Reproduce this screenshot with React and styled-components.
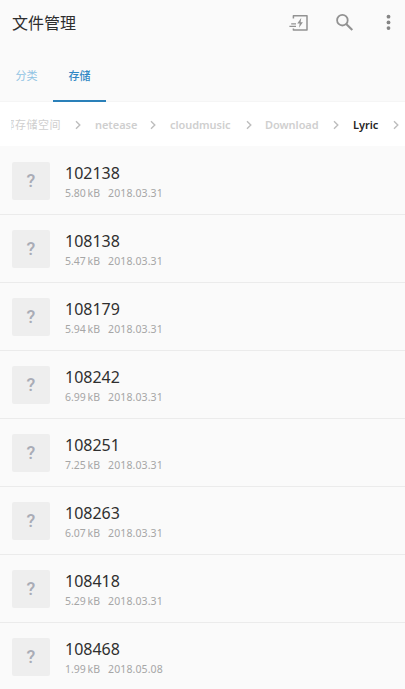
import React from "react";
import styled, { createGlobalStyle } from "styled-components";

const GlobalStyle = createGlobalStyle`
  * {
    box-sizing: border-box;
  }
  body {
    margin: 0;
    background: #fafafa;
    font-family: "Noto Sans", "Noto Sans CJK SC", sans-serif;
  }
`;

const Screen = styled.div`
  width: 405px;
  height: 689px;
  overflow: hidden;
  background: #fafafa;
`;

const Toolbar = styled.header`
  height: 46px;
  padding: 0 14px 0 12px;
  display: flex;
  align-items: center;
  justify-content: space-between;
  h1 {
    margin: 0;
    font-size: 16px;
    font-weight: 400;
    line-height: 24px;
    color: #2e2e2e;
  }
`;

const Actions = styled.div`
  display: flex;
  align-items: center;
  svg {
    display: block;
  }
  svg + svg {
    margin-left: 27px;
  }
  svg:last-child {
    margin-left: 32px;
  }
`;

const Tabs = styled.nav`
  height: 56px;
  display: flex;
  border-bottom: 1px solid #f5f5f5;
`;

const Tab = styled.div`
  width: 53px;
  height: 56px;
  padding-top: 20px;
  text-align: center;
  font-size: 11px;
  line-height: 20px;
  font-weight: ${(props) => (props.$active ? 500 : 400)};
  color: ${(props) => (props.$active ? "#3288c4" : "#8fc3e3")};
  border-bottom: 2px solid
    ${(props) => (props.$active ? "#2a80b9" : "transparent")};
`;

const Breadcrumb = styled.div`
  height: 44px;
  padding: 2px 0 0 11px;
  background: #ffffff;
  display: flex;
  align-items: center;
  overflow: hidden;
`;

const Crumb = styled.span`
  width: ${(props) => props.$width}px;
  flex: none;
  white-space: nowrap;
  font-size: 11px;
  line-height: 16px;
  font-weight: 600;
  letter-spacing: -0.05px;
  color: ${(props) => (props.$current ? "#252525" : "#cfcfcf")};
`;

/* first crumb is scrolled partly off, so its leading glyph is cut */
const ClippedCrumb = styled(Crumb)`
  display: flex;
  justify-content: flex-end;
  overflow: hidden;
  font-weight: 400;
  letter-spacing: 0.5px;
`;

const Separator = styled.svg`
  flex: none;
  display: block;
  margin: 0 ${(props) => props.$after}px 0 ${(props) => props.$before}px;
`;

const Row = styled.div`
  height: 68px;
  padding: 0 12px;
  display: flex;
  align-items: center;
  border-bottom: 1px solid #ebebeb;
  &:first-child {
    height: 69px;
    padding-top: 1px;
  }
`;

const Thumb = styled.div`
  width: 38px;
  height: 38px;
  margin-right: 15px;
  border-radius: 2px;
  background: #eeeeee;
  display: flex;
  align-items: center;
  justify-content: center;
  font-family: Roboto, sans-serif;
  font-size: 18px;
  font-weight: 500;
  color: #a9acb6;
`;

const Name = styled.div`
  padding-top: 3px;
  font-size: 16px;
  line-height: 20px;
  color: #2f2f2f;
`;

const Meta = styled.div`
  display: flex;
  margin-top: 2px;
  font-size: 10.5px;
  line-height: 16px;
  color: #a6a6a6;
`;

const Size = styled.span`
  width: 43px;
  word-spacing: -1px;
`;

const DateText = styled.span`
  letter-spacing: 0.12px;
`;

const files = [
  { name: "102138", size: "5.80 kB", date: "2018.03.31" },
  { name: "108138", size: "5.47 kB", date: "2018.03.31" },
  { name: "108179", size: "5.94 kB", date: "2018.03.31" },
  { name: "108242", size: "6.99 kB", date: "2018.03.31" },
  { name: "108251", size: "7.25 kB", date: "2018.03.31" },
  { name: "108263", size: "6.07 kB", date: "2018.03.31" },
  { name: "108418", size: "5.29 kB", date: "2018.03.31" },
  { name: "108468", size: "1.99 kB", date: "2018.05.08" },
];

function Chevron({ before = 0, after = 0 }) {
  return (
    <Separator $before={before} $after={after} width="6" height="10" viewBox="0 0 6 10">
      <path d="M1 1.2 4.8 5 1 8.8" fill="none" stroke="#bdbdbd" strokeWidth="1.4" />
    </Separator>
  );
}

function TransferIcon() {
  return (
    <svg width="20" height="18" viewBox="0 0 20 18" fill="none" stroke="#929292">
      <path d="M4.4 4.6V1.7H18V16H4.4V14.4" strokeWidth="1.5" strokeLinejoin="round" />
      <path d="M2.2 9.8H7M.4 12.4H7" strokeWidth="1.2" />
      <path d="M12.3 3.8 8.3 9.6H10.7L10 13.8 13.9 8.2H11.6Z" fill="#929292" stroke="none" />
    </svg>
  );
}

function SearchIcon() {
  return (
    <svg width="18" height="18" viewBox="0 0 18 18" fill="none" stroke="#929292">
      <circle cx="6.4" cy="6.2" r="5.3" strokeWidth="1.8" />
      <path d="M10.2 10 16.3 16.1" strokeWidth="2.1" />
    </svg>
  );
}

function MoreIcon() {
  return (
    <svg width="5" height="18" viewBox="0 0 5 18" fill="#858585">
      <circle cx="2.5" cy="2.7" r="1.9" />
      <circle cx="2.5" cy="8.4" r="1.9" />
      <circle cx="2.5" cy="14.1" r="1.9" />
    </svg>
  );
}

function FileRow({ file }) {
  return (
    <Row>
      <Thumb>?</Thumb>
      <div>
        <Name>{file.name}</Name>
        <Meta>
          <Size>{file.size}</Size>
          <DateText>{file.date}</DateText>
        </Meta>
      </div>
    </Row>
  );
}

export default function App() {
  return (
    <Screen>
      <GlobalStyle />
      <Toolbar>
        <h1>文件管理</h1>
        <Actions>
          <TransferIcon />
          <SearchIcon />
          <MoreIcon />
        </Actions>
      </Toolbar>
      <Tabs>
        <Tab>分类</Tab>
        <Tab $active>存储</Tab>
      </Tabs>
      <Breadcrumb>
        <ClippedCrumb $width={50}>部存储空间</ClippedCrumb>
        <Chevron before={14} after={14} />
        <Crumb $width={41}>netease</Crumb>
        <Chevron before={14} after={14} />
        <Crumb $width={61}>cloudmusic</Crumb>
        <Chevron before={15} after={13} />
        <Crumb $width={54}>Download</Crumb>
        <Chevron before={14} after={14} />
        <Crumb $width={26} $current>
          Lyric
        </Crumb>
        <Chevron before={14} />
      </Breadcrumb>
      <main>
        {files.map((file) => (
          <FileRow key={file.name} file={file} />
        ))}
      </main>
    </Screen>
  );
}
